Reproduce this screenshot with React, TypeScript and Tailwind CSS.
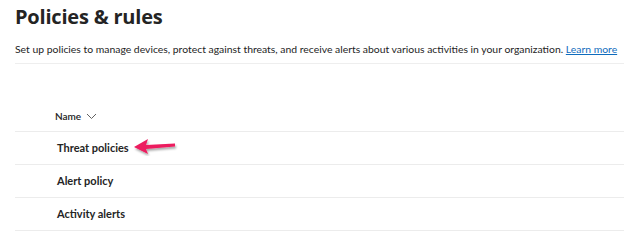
import React from "react";

const rows = ["Threat policies", "Alert policy", "Activity alerts"];

const Arrow: React.FC = () => (
  <svg width="48" height="20" viewBox="0 0 48 20" className="ml-[3px] -mt-[4px]">
    <defs>
      <filter id="sh" x="-20%" y="-40%" width="140%" height="180%">
        <feDropShadow dx="1" dy="2" stdDeviation="1.2" floodColor="#000" floodOpacity="0.35" />
      </filter>
    </defs>
    <g filter="url(#sh)">
      <path d="M2 11 L16 3 L14 9 L43 7.5 L43 10.5 L14 13 L16 18 Z" fill="#ec1c5f" />
    </g>
  </svg>
);

const App: React.FC = () => {
  return (
    <div className="w-[624px] h-[240px] bg-white overflow-hidden font-['Open_Sans',sans-serif] text-[#242424]">
      <div className="pl-[15px]">
        <h1 className="pt-[5px] text-[20px] leading-[24px] font-bold tracking-[-0.2px]">Policies &amp; rules</h1>
        <p className="mt-[12px] text-[10.4px] leading-[16px] whitespace-nowrap font-['Lato',sans-serif]">
          Set up policies to manage devices, protect against threats, and receive alerts about various activities in your organization.{" "}
          <a href="#" className="text-[#0f6cbd] underline">Learn more</a>
        </p>
        <div className="mt-[6px] h-px bg-[#eeeeee]" />

        <div className="mt-[43px] flex items-center gap-[5px] pl-[40px] h-[18px] font-['Lato',sans-serif]">
          <span className="text-[10px] font-semibold">Name</span>
          <svg width="11" height="7" viewBox="0 0 11 7">
            <path d="M1 1 L5.5 5.5 L10 1" fill="none" stroke="#616161" strokeWidth="1" />
          </svg>
        </div>

        <div className="mt-[6px] border-t border-[#ececec]">
          {rows.map((r, i) => (
            <div key={r} className="h-[33px] flex items-center pl-[42px] border-b border-[#ececec]">
              <span className="text-[11px] font-bold font-['Lato',sans-serif]">{r}</span>
              {i === 0 && <Arrow />}
            </div>
          ))}
        </div>
      </div>
    </div>
  );
};

export default App;
